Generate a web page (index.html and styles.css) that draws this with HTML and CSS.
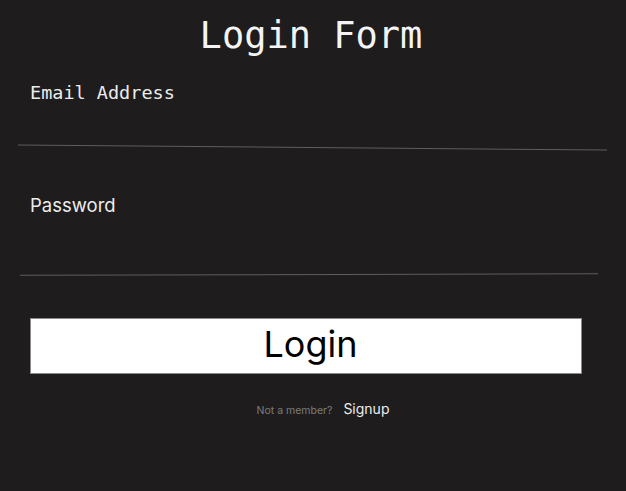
FILE: index.html
```html
<!DOCTYPE html>
<html lang="en">
<head>
<meta charset="utf-8">
<title>Login Form</title>
<link rel="stylesheet" href="styles.css">
</head>
<body>
<main class="form">
  <h1 class="title">Login Form</h1>
  <label class="field field-email">
    <span class="label label-mono">Email Address</span>
    <input class="input input-email" type="email">
    <span class="line line-email"></span>
  </label>
  <label class="field field-password">
    <span class="label label-sans">Password</span>
    <input class="input input-password" type="password">
    <span class="line line-password"></span>
  </label>
  <button class="btn" type="button">Login</button>
  <p class="footer"><span class="muted">Not a member?</span><a class="signup" href="#">Signup</a></p>
</main>
</body>
</html>
```
FILE: styles.css
```css
html, body {
  margin: 0;
  padding: 0;
  background: #1e1c1d;
}
body {
  width: 626px;
  height: 491px;
  overflow: hidden;
}
.form {
  display: flex;
  flex-direction: column;
  padding: 12px 0 0 30px;
}
.title {
  margin: 0 0 0 -30px;
  font-family: "DejaVu Sans Mono", monospace;
  font-weight: normal;
  font-size: 37px;
  line-height: 48px;
  height: 48px;
  color: #f4f4f4;
  text-align: center;
  padding: 0 4px 0 0;
  box-sizing: border-box;
  width: 626px;
}
.field {
  display: flex;
  flex-direction: column;
}
.field-email {
  margin-top: 22px;
}
.field-password {
  margin-top: 46px;
}
.label {
  font-size: 18.5px;
  line-height: 22px;
  color: #ececec;
}
.label-mono {
  font-family: "DejaVu Sans Mono", monospace;
}
.label-sans {
  font-family: Inter, sans-serif;
}
.input {
  background: transparent;
  border: 0;
  outline: none;
  padding: 0;
  margin: 0;
  color: #fff;
  font-family: Inter, sans-serif;
  font-size: 16px;
}
.input-email {
  height: 43px;
}
.input-password {
  height: 58px;
}
.line {
  display: block;
  height: 1px;
  background: #5e5e5e;
}
.line-email {
  width: 589px;
  margin-left: -12px;
  transform: rotate(0.49deg);
}
.line-password {
  width: 578px;
  margin-left: -10px;
  transform: rotate(-0.15deg);
}
.btn {
  margin-top: 43px;
  width: 552px;
  height: 56px;
  background: #fff;
  border: 1px solid #8a8a8a;
  font-family: Inter, sans-serif;
  font-size: 36px;
  color: #000;
  padding: 0 0 4px 9px;
  display: flex;
  align-items: center;
  justify-content: center;
  cursor: pointer;
}
.footer {
  margin: 26px 0 0 -30px;
  width: 626px;
  display: flex;
  justify-content: center;
  align-items: baseline;
  gap: 11px;
  padding-left: 20px;
  box-sizing: border-box;
  font-family: Inter, sans-serif;
}
.muted {
  font-size: 10.5px;
  color: #7c7c7c;
}
.signup {
  font-size: 14px;
  color: #ececec;
  text-decoration: none;
}
```
